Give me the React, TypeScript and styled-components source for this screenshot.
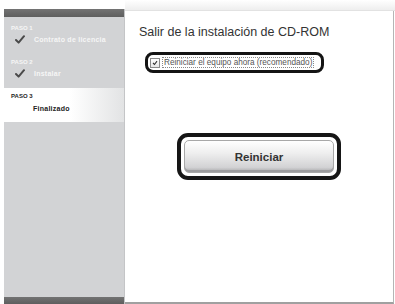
import React from 'react'
import styled, { createGlobalStyle } from 'styled-components'

const GlobalStyle = createGlobalStyle`
    html, body {
        margin: 0;
        padding: 0;
        background: #ffffff;
        font-family: 'Liberation Sans', Arial, sans-serif;
    }
`

const Frame = styled.div`
    display: flex;
    width: 395px;
    height: 304px;
    padding-left: 4px;
    box-sizing: border-box;
    overflow: hidden;
`

const Sidebar = styled.div`
    width: 121px;
    margin-top: 9px;
    display: flex;
    flex-direction: column;
    background: #d2d3d5;
    border-right: 1px solid #c4c5c7;
    box-sizing: border-box;
`

const SideBar = styled.div<{ $h: number }>`
    height: ${props => props.$h}px;
    background: linear-gradient(#737373, #5e5e5e);
`

const Steps = styled.div`
    flex: 1;
    display: flex;
    flex-direction: column;
`

const Step = styled.div<{ $active?: boolean }>`
    display: flex;
    flex-direction: column;
    gap: ${props => (props.$active ? '2px' : '1px')};
    margin-top: ${props => (props.$active ? '3px' : '0')};
    padding: ${props => (props.$active ? '4px 0 8px 7px' : '7px 0 6px 7px')};
    background: ${props =>
        props.$active ? 'linear-gradient(90deg, #ffffff 0%, #ffffff 55%, #e2e3e4 100%)' : 'transparent'};
`

const StepLabel = styled.div<{ $active?: boolean }>`
    font-size: 6px;
    font-weight: bold;
    line-height: 8px;
    color: ${props => (props.$active ? '#1e1e1e' : '#f6f6f6')};
`

const StepName = styled.div<{ $active?: boolean }>`
    display: flex;
    align-items: center;
    gap: 9px;
    height: 12px;
    padding-left: ${props => (props.$active ? '22px' : '4px')};
    font-size: 7px;
    font-weight: bold;
    letter-spacing: 0.25px;
    color: ${props => (props.$active ? '#222' : '#f6f6f6')};
`

const Main = styled.div`
    flex: 1;
    display: flex;
    flex-direction: column;
`

const TopStrip = styled.div`
    height: 10px;
    background: linear-gradient(#ffffff, #eeeeee);
    border-bottom: 1px solid #e2e2e2;
`

const Panel = styled.div`
    flex: 1;
    display: flex;
    flex-direction: column;
    margin-right: 1px;
    padding: 14px 0 0 14px;
    background: #ffffff;
    border-right: 1px solid #b5b5b5;
    border-bottom: 2px solid #a0a0a0;
`

const Title = styled.div`
    font-size: 12.5px;
    color: #333;
    line-height: 14px;
`

const CheckCallout = styled.div`
    display: flex;
    align-items: center;
    gap: 2px;
    width: 179px;
    height: 21px;
    margin: 13px 0 0 6px;
    padding-left: 2px;
    box-sizing: border-box;
    border: 3px solid #141414;
    border-radius: 8px;
`

const CheckBox = styled.span`
    display: inline-flex;
    align-items: center;
    justify-content: center;
    width: 8px;
    height: 8px;
    border: 1px solid #8a8a8a;
    background: linear-gradient(#ffffff, #e6e6e6);
`

const CheckText = styled.span`
    font-size: 8.2px;
    color: #555;
    padding: 0 1px;
    border: 1px dotted #888;
    line-height: 9px;
    white-space: nowrap;
`

const ButtonCallout = styled.div`
    align-self: center;
    width: 164px;
    height: 47px;
    margin: 60px 0 0 -14px;
    padding: 3px;
    box-sizing: border-box;
    border: 4px solid #161616;
    border-radius: 11px;
    display: flex;
`

const Button = styled.button`
    flex: 1;
    border: 1px solid #a8a8a8;
    border-radius: 5px;
    background: linear-gradient(#ffffff 0%, #eeeeee 40%, #d2d2d4 85%, #a8a8aa 100%);
    box-shadow: inset 0 -2px 0 #9c9c9e;
    font-family: 'Liberation Sans', Arial, sans-serif;
    font-size: 11.5px;
    font-weight: bold;
    color: #333;
    padding: 0;
`

const Check = ({ color = '#4a4a4a' }: { color?: string }) => (
    <svg width="10" height="9" viewBox="0 0 10 9">
        <path d="M1 5 L3.6 7.6 L9 1.2" fill="none" stroke={color} strokeWidth="2" strokeLinecap="round" strokeLinejoin="round" />
    </svg>
)

const SmallCheck = () => (
    <svg width="6" height="6" viewBox="0 0 6 6">
        <path d="M1 3 L2.5 4.5 L5 1.2" fill="none" stroke="#333" strokeWidth="1.1" />
    </svg>
)

const steps = [
    { label: 'PASO 1', name: 'Contrato de licencia', done: true },
    { label: 'PASO 2', name: 'Instalar', done: true },
    { label: 'PASO 3', name: 'Finalizado', active: true },
]

const App = () => {
    return (
        <>
            <GlobalStyle />
            <Frame>
                <Sidebar>
                    <SideBar $h={8} />
                    <Steps>
                        {steps.map(step => (
                            <Step key={step.label} $active={step.active}>
                                <StepLabel $active={step.active}>{step.label}</StepLabel>
                                <StepName $active={step.active}>
                                    {step.done && <Check />}
                                    {step.name}
                                </StepName>
                            </Step>
                        ))}
                    </Steps>
                    <SideBar $h={7} />
                </Sidebar>
                <Main>
                    <TopStrip />
                    <Panel>
                        <Title>Salir de la instalación de CD-ROM</Title>
                        <CheckCallout>
                            <CheckBox>
                                <SmallCheck />
                            </CheckBox>
                            <CheckText>Reiniciar el equipo ahora (recomendado)</CheckText>
                        </CheckCallout>
                        <ButtonCallout>
                            <Button>Reiniciar</Button>
                        </ButtonCallout>
                    </Panel>
                </Main>
            </Frame>
        </>
    )
}

export default App
